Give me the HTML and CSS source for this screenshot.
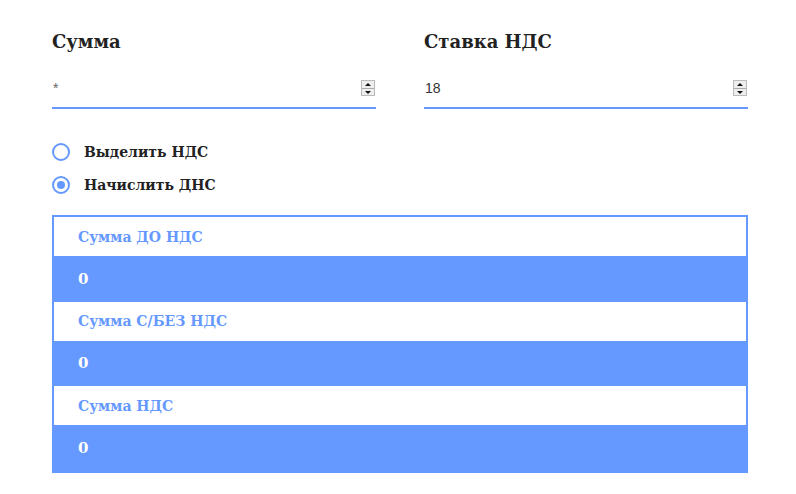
FILE: index.html
```html
<!DOCTYPE html>
<html lang="ru">
<head>
    <meta charset="UTF-8">
    <meta name="viewport" content="width=device-width, initial-scale=1.0">
    <title>Калькулятор НДС</title>
    <link rel="stylesheet" href="styles.css">
</head>
<body>
    <div class="calc">
        <div class="fields">
            <div class="field">
                <h2>Сумма</h2>
                <div class="input-wrap">
                    <input type="text" id="sum" placeholder="*">
                    <span class="spin"><i class="up"></i><i class="down"></i></span>
                </div>
            </div>
            <div class="field">
                <h2>Ставка НДС</h2>
                <div class="input-wrap">
                    <input type="text" id="rate" value="18">
                    <span class="spin"><i class="up"></i><i class="down"></i></span>
                </div>
            </div>
        </div>

        <div class="modes">
            <label class="radio">
                <input type="radio" name="mode" value="extract">
                <span class="dot"></span>
                Выделить НДС
            </label>
            <label class="radio">
                <input type="radio" name="mode" value="add" checked>
                <span class="dot"></span>
                Начислить ДНС
            </label>
        </div>

        <div class="result">
            <div class="result-label">Сумма ДО НДС</div>
            <div class="result-value">0</div>
            <div class="result-label">Сумма С/БЕЗ НДС</div>
            <div class="result-value">0</div>
            <div class="result-label">Сумма НДС</div>
            <div class="result-value">0</div>
        </div>
    </div>
</body>
</html>
```

FILE: styles.css
```css
body {
    margin: 0;
    background: #fff;
    font-family: 'DejaVu Serif', 'Liberation Serif', serif;
    color: #222;
}
.calc {
    width: 696px;
    margin: 0 auto;
    padding: 30px 0 0 4px;
}
.fields {
    display: grid;
    grid-template-columns: 324px 324px;
    gap: 48px;
}
.field h2 {
    margin: 0 0 25px;
    font-size: 18px;
    font-weight: 700;
    line-height: 24px;
}
.input-wrap {
    display: flex;
    align-items: center;
    height: 16px;
    padding: 1px 0 11px;
    border-bottom: 2px solid #6699ff;
}
.input-wrap input {
    flex: 1;
    border: none;
    outline: none;
    padding: 0 1px;
    font-family: 'Liberation Sans', Arial, sans-serif;
    font-size: 14px;
    color: #333;
    background: transparent;
}
.input-wrap input::placeholder {
    color: #666;
}
.spin {
    display: flex;
    flex-direction: column;
    width: 12px;
    height: 14px;
    margin-right: 1px;
    border: 1px solid #bbb;
    background: #eee;
}
.spin i {
    flex: 1;
    position: relative;
}
.spin .up {
    border-bottom: 1px solid #aaa;
}
.spin i::after {
    content: '';
    position: absolute;
    left: 3px;
    top: 2px;
    border-left: 3px solid transparent;
    border-right: 3px solid transparent;
}
.spin .up::after {
    border-bottom: 3px solid #111;
}
.spin .down::after {
    border-top: 3px solid #111;
}
.modes {
    display: flex;
    flex-direction: column;
    gap: 13px;
    margin-top: 33px;
}
.radio {
    display: flex;
    align-items: center;
    gap: 14px;
    font-size: 14px;
    font-weight: 700;
    line-height: 20px;
    cursor: pointer;
}
.radio input {
    display: none;
}
.dot {
    width: 14px;
    height: 14px;
    border: 2px solid #6699ff;
    border-radius: 50%;
    display: flex;
    align-items: center;
    justify-content: center;
}
.radio input:checked + .dot::after {
    content: '';
    width: 8px;
    height: 8px;
    border-radius: 50%;
    background: #6699ff;
}
.result {
    margin-top: 20px;
    border: 2px solid #6699ff;
}
.result-label {
    height: 39px;
    padding-left: 24px;
    display: flex;
    align-items: center;
    color: #6699ff;
    font-size: 14px;
    font-weight: 700;
}
.result-value {
    height: 45.5px;
    padding-left: 24px;
    display: flex;
    align-items: center;
    background: #6699ff;
    color: #fff;
    font-size: 15px;
    font-weight: 700;
}
```
